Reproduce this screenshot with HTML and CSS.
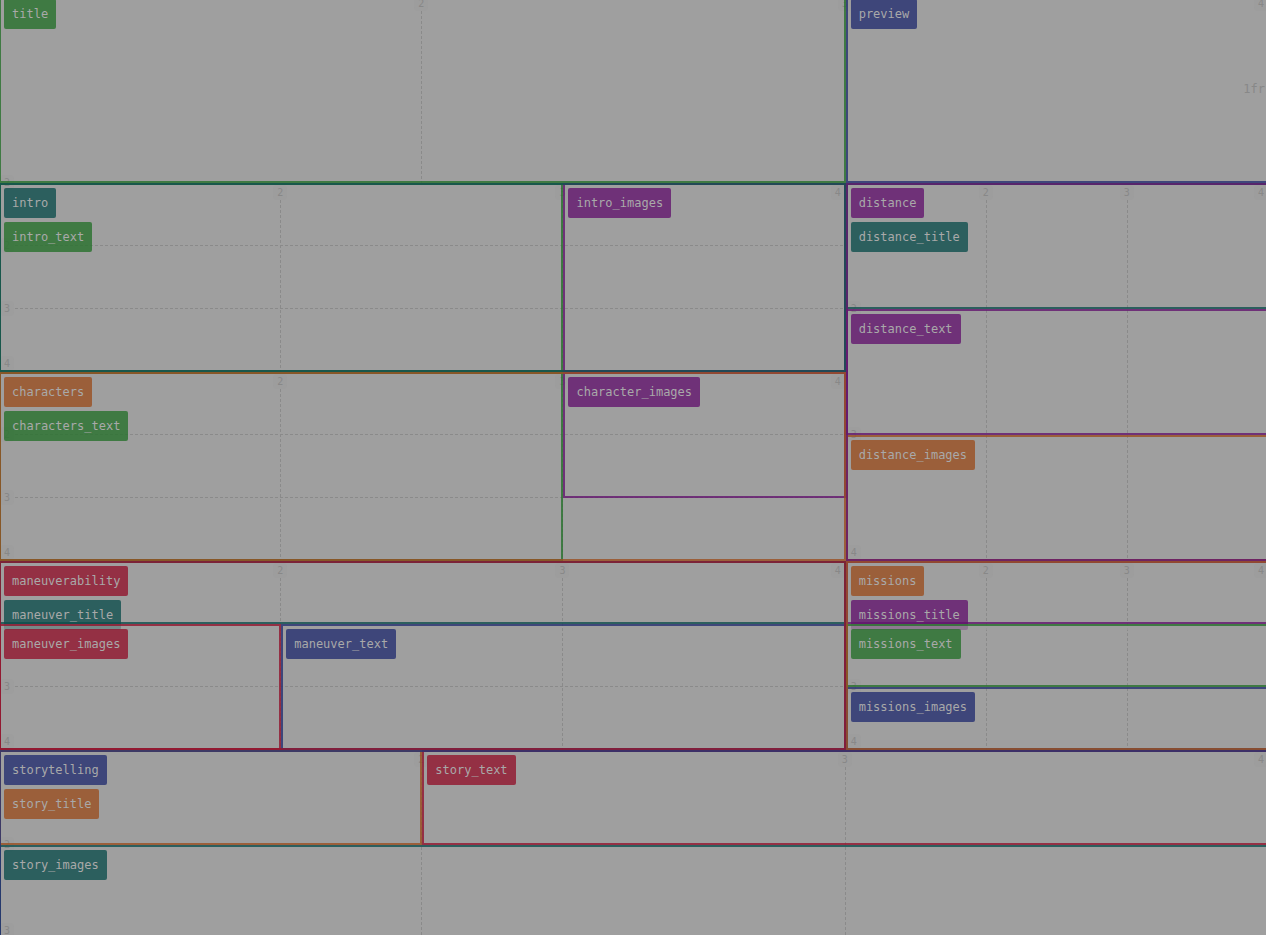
FILE: index.html
```html
<!DOCTYPE html>
<html lang="en">
<head>
<meta charset="utf-8">
<title>Grid areas</title>
<link rel="stylesheet" href="styles.css">
</head>
<body>
<main class="board">
  <i class="v c2 row-one"></i>
  <b class="n top c2">2</b><b class="n top c3">3</b><b class="n top last">4</b>
  <b class="n side r2">2</b>
  <span class="track">1fr</span>

  <section class="area green title"><span class="tag">title</span></section>
  <section class="area blue preview"><span class="tag">preview</span></section>

  <section class="area teal grid intro">
    <i class="v c2"></i><i class="v c3"></i><i class="h r2"></i><i class="h r3"></i>
    <b class="n top c2">2</b><b class="n top c3">3</b><b class="n top last">4</b>
    <b class="n side r2">2</b><b class="n side r3">3</b><b class="n side end">4</b>
    <div class="area green left-two under"><span class="tag">intro_text</span></div>
    <div class="area purple right-col"><span class="tag">intro_images</span></div>
    <span class="tag">intro</span>
  </section>

  <section class="area orange grid characters">
    <i class="v c2"></i><i class="v c3"></i><i class="h r2"></i><i class="h r3"></i>
    <b class="n top c2">2</b><b class="n top c3">3</b><b class="n top last">4</b>
    <b class="n side r2">2</b><b class="n side r3">3</b><b class="n side end">4</b>
    <div class="area green left-two under"><span class="tag">characters_text</span></div>
    <div class="area purple right-top"><span class="tag">character_images</span></div>
    <span class="tag">characters</span>
  </section>

  <section class="area purple grid distance">
    <i class="v c2"></i><i class="v c3"></i>
    <b class="n top c2">2</b><b class="n top c3">3</b><b class="n top last">4</b>
    <b class="n side r2">2</b><b class="n side r3">3</b><b class="n side end">4</b>
    <div class="area teal band-one under"><span class="tag">distance_title</span></div>
    <div class="area purple band-two"><span class="tag">distance_text</span></div>
    <div class="area orange band-three"><span class="tag">distance_images</span></div>
    <span class="tag">distance</span>
  </section>

  <section class="area red grid maneuver">
    <i class="v c2"></i><i class="v c3"></i><i class="h r3"></i>
    <b class="n top c2">2</b><b class="n top c3">3</b><b class="n top last">4</b>
    <b class="n side r3">3</b><b class="n side end">4</b>
    <div class="area teal band-one under"><span class="tag">maneuver_title</span></div>
    <div class="area red cover low-left"><span class="tag">maneuver_images</span></div>
    <div class="area blue low-right"><span class="tag">maneuver_text</span></div>
    <span class="tag">maneuverability</span>
  </section>

  <section class="area orange grid missions">
    <i class="v c2"></i><i class="v c3"></i>
    <b class="n top c2">2</b><b class="n top c3">3</b><b class="n top last">4</b>
    <b class="n side r3">3</b><b class="n side end">4</b>
    <div class="area purple band-one under"><span class="tag">missions_title</span></div>
    <div class="area green cover band-two"><span class="tag">missions_text</span></div>
    <div class="area blue band-three"><span class="tag">missions_images</span></div>
    <span class="tag">missions</span>
  </section>

  <section class="area blue grid halves story">
    <i class="v c2"></i><i class="v c3"></i>
    <b class="n top c2">2</b><b class="n top c3">3</b><b class="n top last">4</b>
    <b class="n side r2">2</b><b class="n side end">3</b>
    <div class="area orange story-title under"><span class="tag">story_title</span></div>
    <div class="area red story-text"><span class="tag">story_text</span></div>
    <div class="area teal band-two"><span class="tag">story_images</span></div>
    <span class="tag">storytelling</span>
  </section>
</main>
</body>
</html>
```
FILE: styles.css
```css
* { box-sizing: border-box; }

body {
  margin: 0;
  overflow: hidden;
  background: #9f9f9f;
  font-family: "DejaVu Sans Mono", monospace;
  font-size: 12px;
}

/* The board bleeds slightly past every edge of the window. */
.board {
  display: grid;
  grid-template-columns: repeat(3, minmax(0, 1fr));
  grid-template-rows: repeat(5, minmax(0, 1fr));
  width: calc(100% + 4px);
  height: calc(100vh + 10px);
  margin: -6px 0 0 -1px;
}

.grid {
  display: grid;
  grid-template-columns: repeat(3, minmax(0, 1fr));
  grid-template-rows: repeat(3, minmax(0, 1fr));
}
.halves { grid-template-rows: repeat(2, minmax(0, 1fr)); }

/* Areas */
.area { position: relative; min-width: 0; min-height: 0; }
.area::after {
  content: "";
  position: absolute;
  inset: 0;
  border: 2px solid var(--tone);
  pointer-events: none;
}
.green { --tone: rgba(39, 113, 44, .8); }
.teal { --tone: rgba(15, 79, 78, .8); }
.purple { --tone: rgba(99, 21, 110, .8); }
.orange { --tone: rgba(154, 79, 33, .8); }
.red { --tone: rgba(145, 20, 45, .8); }
.blue { --tone: rgba(38, 48, 112, .8); }

.tag {
  display: block;
  position: relative;
  width: max-content;
  height: 30px;
  margin: 5px;
  padding: 0 8px;
  border-radius: 2px;
  background: var(--tone);
  color: #a9a9a9;
  line-height: 30px;
}
.grid > .tag { grid-area: 1 / 1; }
.area:not(.grid) { display: flex; align-items: flex-start; }
.under > .tag { margin-top: 39px; }

/* Veils the part of a tag that hangs over from the row above. */
.cover::before {
  content: "";
  position: absolute;
  inset: 0 0 auto;
  height: 6px;
  background: rgba(159, 159, 159, .65);
}

/* Guide lines */
.v { grid-row: 1 / -1; width: 1px; margin: 17px 0 0 -1px;
  background: repeating-linear-gradient(#8a8a8a 0 3px, transparent 3px 5px); }
.h { grid-column: 1 / -1; height: 1px; margin: -1px 0 0 16px;
  background: repeating-linear-gradient(90deg, #8a8a8a 0 3px, transparent 3px 5px); }
.v.row-one { grid-row: 1; }

.n {
  width: 14px;
  height: 15px;
  border-radius: 4px;
  background: #9d9d9d;
  color: #888888;
  font-size: 10px;
  font-weight: 400;
  line-height: 15px;
  text-align: center;
}
.top { grid-row: 1; margin: 2px 0 0 -8px; }
.last { grid-column: 3; justify-self: end; margin-right: 1px; }
.side { grid-column: 1; margin: -8px 0 0 1px; }
.end { grid-row: -2; align-self: end; margin-bottom: 1px; }
.c2 { grid-column: 2; }
.c3 { grid-column: 3; }
.r2 { grid-row: 2; }
.r3 { grid-row: 3; }

.track {
  grid-area: 1 / 3;
  align-self: center;
  justify-self: end;
  margin-right: 4px;
  color: #888888;
}

/* Placement on the board */
.title { grid-area: 1 / 1 / 2 / 3; }
.preview { grid-area: 1 / 3; }
.intro { grid-area: 2 / 1 / 3 / 3; }
.characters { grid-area: 3 / 1 / 4 / 3; }
.maneuver { grid-area: 4 / 1 / 5 / 3; }
.distance { grid-area: 2 / 3 / 4 / 4; }
.missions { grid-area: 4 / 3; }
.story { grid-area: 5 / 1 / 6 / 4; }

/* Placement inside an area */
.left-two { grid-area: 1 / 1 / 4 / 3; }
.right-col { grid-area: 1 / 3 / 4 / 4; }
.right-top { grid-area: 1 / 3 / 3 / 4; }
.band-one { grid-area: 1 / 1 / 2 / 4; }
.band-two { grid-area: 2 / 1 / 3 / 4; }
.band-three { grid-area: 3 / 1 / 4 / 4; }
.low-left { grid-area: 2 / 1 / 4 / 2; }
.low-right { grid-area: 2 / 2 / 4 / 4; }
.story-title { grid-area: 1 / 1; }
.story-text { grid-area: 1 / 2 / 2 / 4; }
```
